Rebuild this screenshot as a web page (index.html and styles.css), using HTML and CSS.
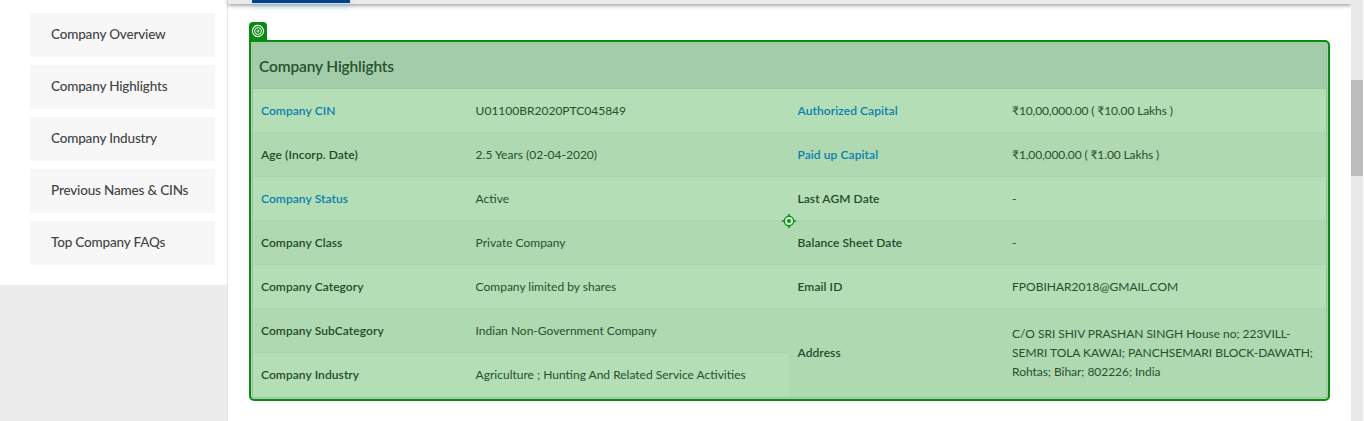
FILE: index.html
```html
<!DOCTYPE html>
<html lang="en">
<head>
<meta charset="utf-8">
<title>Company Highlights</title>
<link rel="stylesheet" href="styles.css">
</head>
<body>
<div class="page">
  <aside class="side">
    <nav class="menu">
      <a class="menu-item"><span>Company Overview</span></a>
      <a class="menu-item"><span>Company Highlights</span></a>
      <a class="menu-item"><span>Company Industry</span></a>
      <a class="menu-item"><span>Previous Names &amp; CINs</span></a>
      <a class="menu-item"><span>Top Company FAQs</span></a>
    </nav>
  </aside>
  <main class="main">
    <div class="tabs"><div class="tab-active"></div></div>
    <section class="frame">
      <div class="badge">
        <svg width="14" height="14" viewBox="0 0 14 14" fill="none" stroke="#fff"><circle cx="7" cy="7" r="5.6" stroke-width="1.1"/><circle cx="7" cy="7" r="3.4" stroke-width="1"/><circle cx="7" cy="7" r="1.1" stroke-width=".8"/></svg>
      </div>
      <div class="card">
        <h2 class="title">Company Highlights</h2>
        <table class="facts">
          <tr><th class="link">Company CIN</th><td>U01100BR2020PTC045849</td><th class="link">Authorized Capital</th><td class="money">₹10,00,000.00 ( ₹10.00 Lakhs )</td></tr>
          <tr><th>Age (Incorp. Date)</th><td>2.5 Years (02-04-2020)</td><th class="link">Paid up Capital</th><td class="money">₹1,00,000.00 ( ₹1.00 Lakhs )</td></tr>
          <tr><th class="link">Company Status</th><td>Active</td><th>Last AGM Date</th><td>-</td></tr>
          <tr><th>Company Class</th><td>Private Company</td><th>Balance Sheet Date</th><td>-</td></tr>
          <tr><th>Company Category</th><td>Company limited by shares</td><th>Email ID</th><td>FPOBIHAR2018@GMAIL.COM</td></tr>
          <tr><th>Company SubCategory</th><td>Indian Non-Government Company</td><th class="tall" rowspan="2">Address</th><td class="tall address" rowspan="2">C/O SRI SHIV PRASHAN SINGH House no; 223VILL-<br>SEMRI TOLA KAWAI; PANCHSEMARI BLOCK-DAWATH;<br>Rohtas; Bihar; 802226; India</td></tr>
          <tr><th>Company Industry</th><td>Agriculture ; Hunting And Related Service Activities</td></tr>
        </table>
      </div>
      <svg class="target" width="14" height="14" viewBox="0 0 14 14" fill="none" stroke="#0b8f12"><circle cx="7" cy="7" r="4.7" fill="#d5efd7" stroke-width="1.4"/><circle cx="7" cy="7" r="2" fill="#0b8f12" stroke="none"/><path d="M7 0v2.5M7 11.5V14M0 7h2.5M11.5 7H14" stroke-width="1.6"/></svg>
    </section>
  </main>
  <div class="scrollbar"><div class="thumb"></div></div>
</div>
</body>
</html>
```
FILE: styles.css
```css
* { box-sizing: border-box; }
body { margin: 0; background: #fff; font-family: Lato, "Noto Sans", sans-serif; overflow: hidden; }
.page { display: flex; width: 1363px; height: 421px; }
.side { width: 228px; background: #ececec; border-right: 1px solid #e6e6e6; }
.menu { display: flex; flex-direction: column; gap: 8px; height: 285px; padding: 13px 12px 0 30px; background: #fff; border-bottom-right-radius: 3px; }
.menu-item { height: 44px; padding-left: 21px; background: #f7f7f7; color: #444; font-size: 13.5px; font-weight: 500; line-height: 42px; letter-spacing: -.17px; white-space: nowrap; }
.main { width: 1123px; }
.tabs { height: 4px; padding-left: 24px; background: #ebebec; box-shadow: 0 1px 4px rgba(0,0,0,.5); }
.tab-active { width: 98px; height: 3px; background: #04418f; box-shadow: 0 3px 6px rgba(60,180,210,.5); }
.frame { position: relative; width: 1081px; height: 361px; margin: 36px 0 0 21px; padding: 1px; border: 2px solid #078c10; border-radius: 0 5px 5px 5px; background: #a9d3ad; }
.badge { position: absolute; left: -2px; top: -20px; width: 18px; height: 20px; padding: 2px; border-radius: 4px 4px 0 0; background: #078c10; }
.badge svg { display: block; }
.card { width: 1075px; height: 355px; border: 1px solid #9bc5a0; border-bottom-width: 2px; }
.title { height: 45px; margin: 0; padding-left: 6px; border-bottom: 1px solid #9bc8a1; background: #a3cdaa; color: #28502d; font-size: 15.5px; font-weight: 600; line-height: 44px; letter-spacing: -.15px; white-space: nowrap; }
.facts { width: 1073px; height: 308px; table-layout: fixed; border-collapse: separate; border-spacing: 0; background: #b4deb6; color: #27502c; font-size: 12px; line-height: 19px; }
.facts tr { height: 44px; }
.facts tr:nth-child(even), .tall { background: #afd9b1; }
.facts tr:last-child, .facts tr:nth-child(odd) { background: #b4deb6; }
.facts th, .facts td { padding: 0 0 0 8px; border-bottom: 1px solid #abd5ae; text-align: left; vertical-align: middle; white-space: nowrap; }
.facts th { width: 214.6px; font-weight: 600; letter-spacing: .08px; color: #234b28; }
.facts td { width: 321.9px; font-weight: 400; }
.facts .money { letter-spacing: -.12px; }
.facts .address { letter-spacing: -.04px; }
.facts .link { color: #087eb0; }
.facts tr:last-child th, .facts tr:last-child td, .facts .tall { padding-bottom: 2px; border-bottom: 0; }
.target { position: absolute; left: 531px; top: 172px; }
.scrollbar { width: 12px; padding-top: 80px; background: #e9e9e9; }
.thumb { height: 96px; background: #bcbcbc; }
```
